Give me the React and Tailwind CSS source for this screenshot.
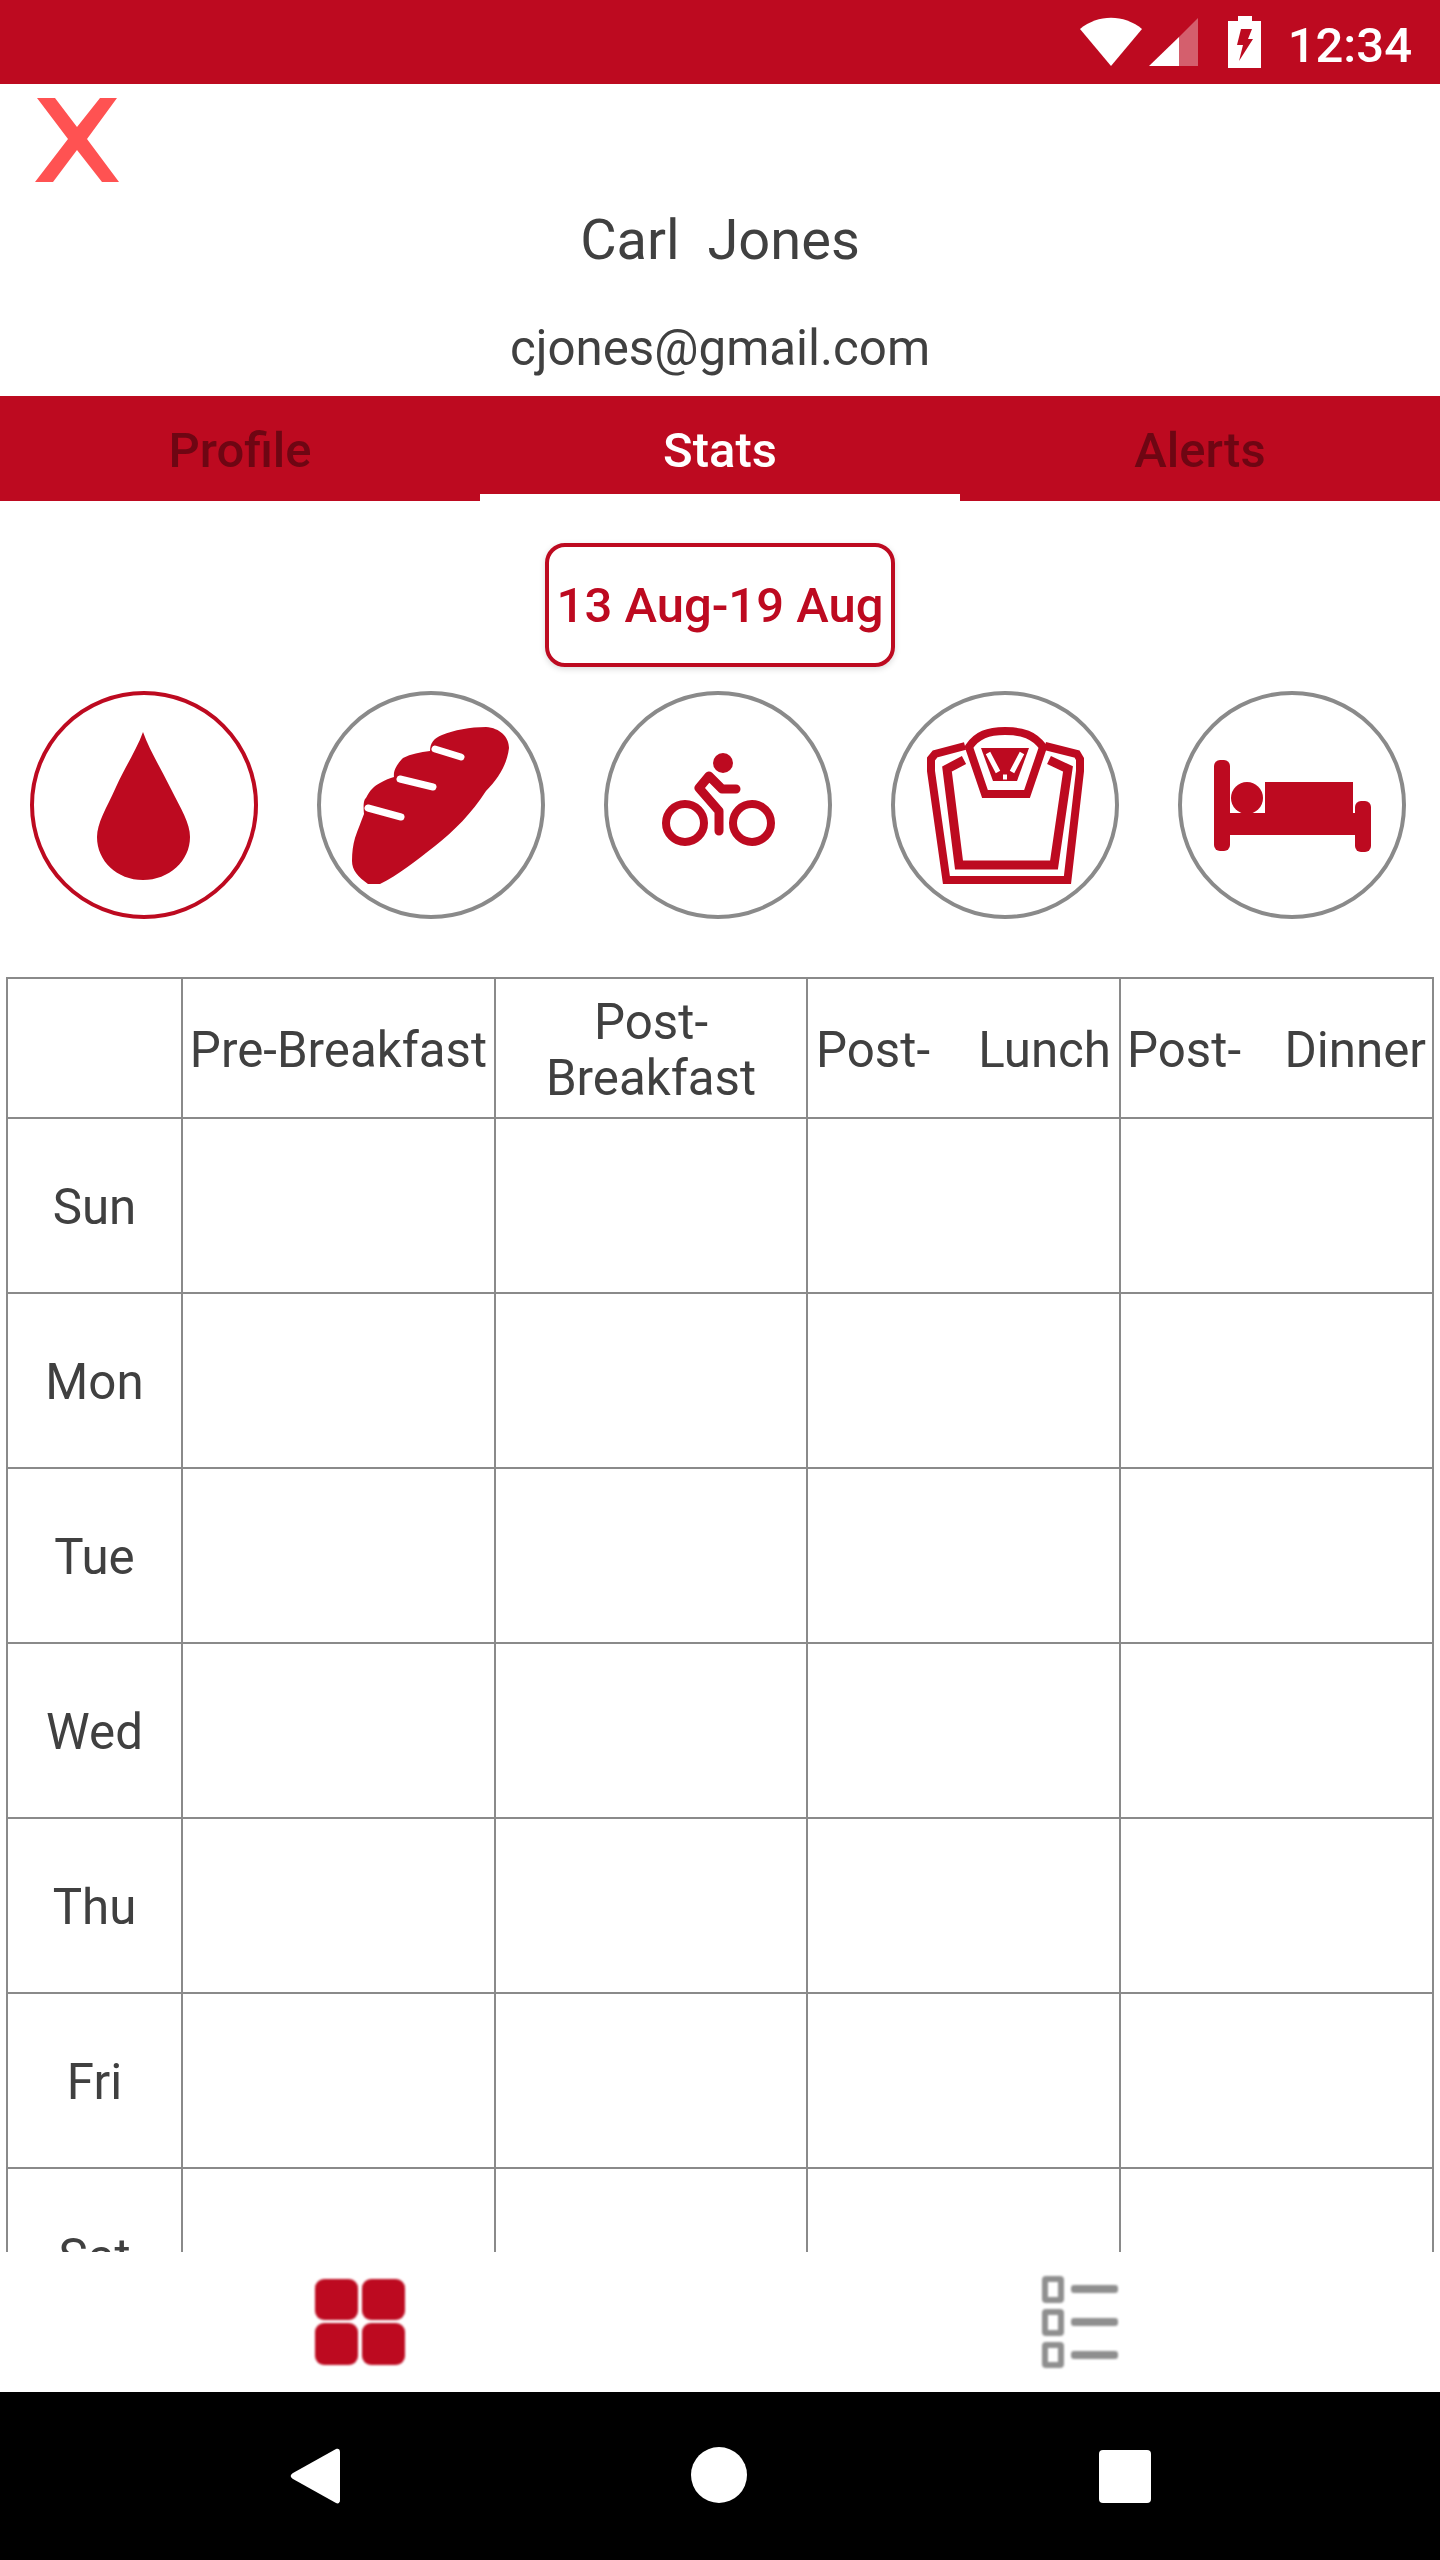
import React from 'react';

const red = '#bd0a20';

const days = ['Sun', 'Mon', 'Tue', 'Wed', 'Thu', 'Fri', 'Sat'];

const Wifi = () => (
  <svg width="62" height="50" viewBox="0 0 62 50">
    <path d="M0 12 C18 -3 44 -3 62 12 L31 49 Z" fill="#fff" />
  </svg>
);

const Signal = () => (
  <svg width="50" height="50" viewBox="0 0 50 50">
    <path d="M0 49 L30 20 L30 49 Z" fill="#fff" />
    <path d="M30 20 L49 1 L49 49 L30 49 Z" fill="#fff" fillOpacity="0.35" />
  </svg>
);

const Battery = () => (
  <svg width="33" height="52" viewBox="0 0 33 52">
    <path d="M10 0 H24 V5 H33 V52 H0 V5 H10 Z" fill="#fff" />
    <path d="M13 13 H24 L20 23 H25 L11 45 L15 29 H9 Z" fill={red} />
  </svg>
);

const Drop = () => (
  <svg className="blur-[0.4px]" width="157" height="157" viewBox="0 0 157 157">
    <path d="M78 5 C84 22 96 42 106 62 C116 82 125 96 125 110 C125 134 104 153 78 153 C52 153 32 134 32 110 C32 96 41 82 51 60 C60 40 72 22 78 5 Z" fill={red} />
  </svg>
);

const Bread = () => (
  <svg className="blur-[0.4px]" width="157" height="157" viewBox="0 0 157 157">
    <path d="M134 0 C148 1 157 10 157 21 C155 38 146 52 134 64 C120 86 102 104 83 119 C64 134 46 148 28 157 L16 157 C6 150 0 143 0 134 C0 125 1 118 3 111 C6 102 9 95 12 87 C11 78 12 72 14 71 C18 63 22 59 28 56 C33 53 38 51 42 50 C41 43 46 36 51 31 C59 27 68 25 78 24 C78 16 82 11 90 8 C102 3 118 0 134 0 Z" fill={red} />
    <path d="M16 81 L49 90 M48 52 L81 60 M83 22 L109 30" stroke="#fff" strokeWidth="7" strokeLinecap="round" fill="none" />
  </svg>
);

const Bike = () => (
  <svg className="blur-[0.5px]" width="157" height="157" viewBox="0 0 157 157">
    <circle cx="84" cy="36" r="10" fill={red} />
    <circle cx="46" cy="96" r="19" fill="none" stroke={red} strokeWidth="8" />
    <circle cx="113" cy="96" r="19" fill="none" stroke={red} strokeWidth="8" />
    <path d="M80 104 V84 L60 61 L70 49 L83 62 H97" fill="none" stroke={red} strokeWidth="9" strokeLinecap="round" strokeLinejoin="round" />
  </svg>
);

const Scale = () => (
  <svg className="blur-[0.5px]" width="157" height="157" viewBox="0 0 157 157" fill="none" stroke={red} strokeWidth="8">
    <path d="M38 19 L8 27 L4 32 L4 44 L20 157 M118 19 L150 27 L153 32 L153 44 L140 157 M16 153 H144" />
    <path d="M37 33 L20 42 L32 138 H127 L141 42 L122 33" strokeWidth="9" />
    <path d="M42 20 C50 8 61 4 78 4 C96 4 107 8 116 20 L100 67 H58 Z" />
    <path d="M54 21 H102 L90 54 H66 Z" fill={red} stroke="none" />
    <path d="M61 26 L71 45 M95 26 L85 45 M76 50 H80" stroke="#fff" strokeWidth="5" />
  </svg>
);

const Bed = () => (
  <svg className="blur-[0.4px]" width="157" height="157" viewBox="0 0 157 157" fill={red}>
    <rect x="0" y="33" width="16" height="91" rx="6" />
    <circle cx="33" cy="71" r="16" />
    <rect x="51" y="55" width="88" height="35" />
    <rect x="0" y="86" width="157" height="22" />
    <rect x="141" y="74" width="16" height="51" rx="6" />
  </svg>
);

const GridIcon = () => (
  <svg className="blur-[1px]" width="96" height="92" viewBox="0 0 96 92" fill={red}>
    <rect x="3" y="3" width="43" height="41" rx="9" />
    <rect x="50" y="3" width="43" height="41" rx="9" />
    <rect x="3" y="47" width="43" height="42" rx="9" />
    <rect x="50" y="47" width="43" height="42" rx="9" />
  </svg>
);

const ListIcon = () => (
  <svg className="blur-[1px]" width="76" height="96" viewBox="0 0 76 96">
    <g fill="none" stroke="#8f8f8f" strokeWidth="6">
      <rect x="3" y="5" width="16" height="21" rx="1" />
      <rect x="3" y="38" width="16" height="21" rx="1" />
      <rect x="3" y="71" width="16" height="20" rx="1" />
    </g>
    <g fill="#8f8f8f">
      <rect x="29" y="11" width="47" height="8" rx="3" />
      <rect x="29" y="44" width="47" height="8" rx="3" />
      <rect x="29" y="77" width="47" height="8" rx="3" />
    </g>
  </svg>
);

const Circle = ({ active, children }) => (
  <div className="flex justify-center">
    <div className={`w-[228px] h-[228px] rounded-full border-4 flex items-center justify-center ${active ? 'border-[#bd0a20]' : 'border-[#8a8a8a]'}`}>
      {children}
    </div>
  </div>
);

const App = () => {
  return (
    <div className="w-[1440px] h-[2560px] flex flex-col bg-white text-[#404040] overflow-hidden font-['Roboto',sans-serif]">
      {/* Status bar */}
      <div className="h-[84px] shrink-0 bg-[#bd0a20] flex items-center justify-end pr-[28px]">
        <div className="mr-[7px]"><Wifi /></div>
        <div className="mr-[29px]"><Signal /></div>
        <div className="mr-[27px]"><Battery /></div>
        <span className="text-white text-[49px] font-medium leading-none mt-[6px]">12:34</span>
      </div>

      {/* Cabecera */}
      <div className="h-[312px] shrink-0 flex flex-col items-center relative">
        <svg className="absolute left-[35px] top-[14px] blur-[0.4px]" width="84" height="84" viewBox="0 0 84 84">
          <path d="M2 0 H20 L42 29 L65 0 H82 L52 41 L84 84 H67 L42 52 L18 84 H0 L33 41 Z" fill="#ff5252" />
        </svg>
        <div className="mt-[124px] text-[56px] leading-[64px] whitespace-pre">Carl  Jones</div>
        <div className="mt-[48px] text-[49.25px] leading-[56px]">cjones@gmail.com</div>
      </div>

      {/* Tabs */}
      <div className="h-[105px] shrink-0 bg-[#bd0a20] grid grid-cols-3 text-[49px] font-medium">
        <div className="flex items-center justify-center text-[#6e0613] pt-[5px]">Profile</div>
        <div className="flex items-center justify-center text-white border-b-[7px] border-white pt-[12px]">Stats</div>
        <div className="flex items-center justify-center text-[#6e0613] pt-[5px]">Alerts</div>
      </div>

      {/* Fecha */}
      <div className="flex justify-center mt-[42px] shrink-0">
        <div className="w-[350px] h-[124px] pt-[2px] rounded-[20px] border-4 border-[#bd0a20] flex items-center justify-center text-[#bd0a20] text-[49px] font-medium shadow-[0_2px_6px_rgba(0,0,0,0.15)] whitespace-nowrap">
          13 Aug-19 Aug
        </div>
      </div>

      {/* Iconos */}
      <div className="grid grid-cols-5 w-[1436px] mt-[24px] shrink-0">
        <Circle active><Drop /></Circle>
        <Circle><Bread /></Circle>
        <Circle><Bike /></Circle>
        <Circle><Scale /></Circle>
        <Circle><Bed /></Circle>
      </div>

      {/* Tabla */}
      <div className="flex-1 min-h-0 overflow-hidden px-[6px] pt-[58px]">
        <table className="w-[1426px] table-fixed border-collapse text-[49.25px] leading-[56px]">
          <colgroup>
            <col className="w-[175px]" />
            <col className="w-[313px]" />
            <col className="w-[312px]" />
            <col className="w-[313px]" />
            <col className="w-[313px]" />
          </colgroup>
          <tbody>
            <tr className="h-[140px]">
              <td className="border-2 border-[#8a8a8a]"></td>
              <td className="border-2 border-[#8a8a8a] pt-[4px] text-center whitespace-nowrap">Pre-Breakfast</td>
              <td className="border-2 border-[#8a8a8a] pt-[4px] text-center">Post-<br />Breakfast</td>
              <td className="border-2 border-[#8a8a8a] pt-[4px] px-[8px]">
                <div className="flex justify-between"><span>Post-</span><span>Lunch</span></div>
              </td>
              <td className="border-2 border-[#8a8a8a] pt-[4px] px-[6px]">
                <div className="flex justify-between"><span>Post-</span><span>Dinner</span></div>
              </td>
            </tr>
            {days.map((day) => (
              <tr key={day} className="h-[175px]">
                <td className="border-2 border-[#8a8a8a] pt-[3px] text-center">{day}</td>
                <td className="border-2 border-[#8a8a8a]"></td>
                <td className="border-2 border-[#8a8a8a]"></td>
                <td className="border-2 border-[#8a8a8a]"></td>
                <td className="border-2 border-[#8a8a8a]"></td>
              </tr>
            ))}
          </tbody>
        </table>
      </div>

      {/* Nav inferior */}
      <div className="h-[140px] shrink-0 bg-white grid grid-cols-2">
        <div className="flex items-center justify-center"><GridIcon /></div>
        <div className="flex items-center justify-center"><ListIcon /></div>
      </div>

      {/* Barra Android */}
      <div className="h-[168px] shrink-0 bg-black relative">
        <svg className="absolute left-[290px] top-[56px]" width="50" height="56" viewBox="0 0 50 56">
          <path d="M46 1 C48 0 50 1 50 4 V52 C50 55 48 56 46 55 L3 31 C0 29 0 27 3 25 Z" fill="#fff" />
        </svg>
        <div className="absolute left-[691px] top-[55px] w-[56px] h-[56px] rounded-full bg-white"></div>
        <div className="absolute left-[1099px] top-[58px] w-[52px] h-[53px] rounded-[4px] bg-white"></div>
      </div>
    </div>
  );
};

export default App;
